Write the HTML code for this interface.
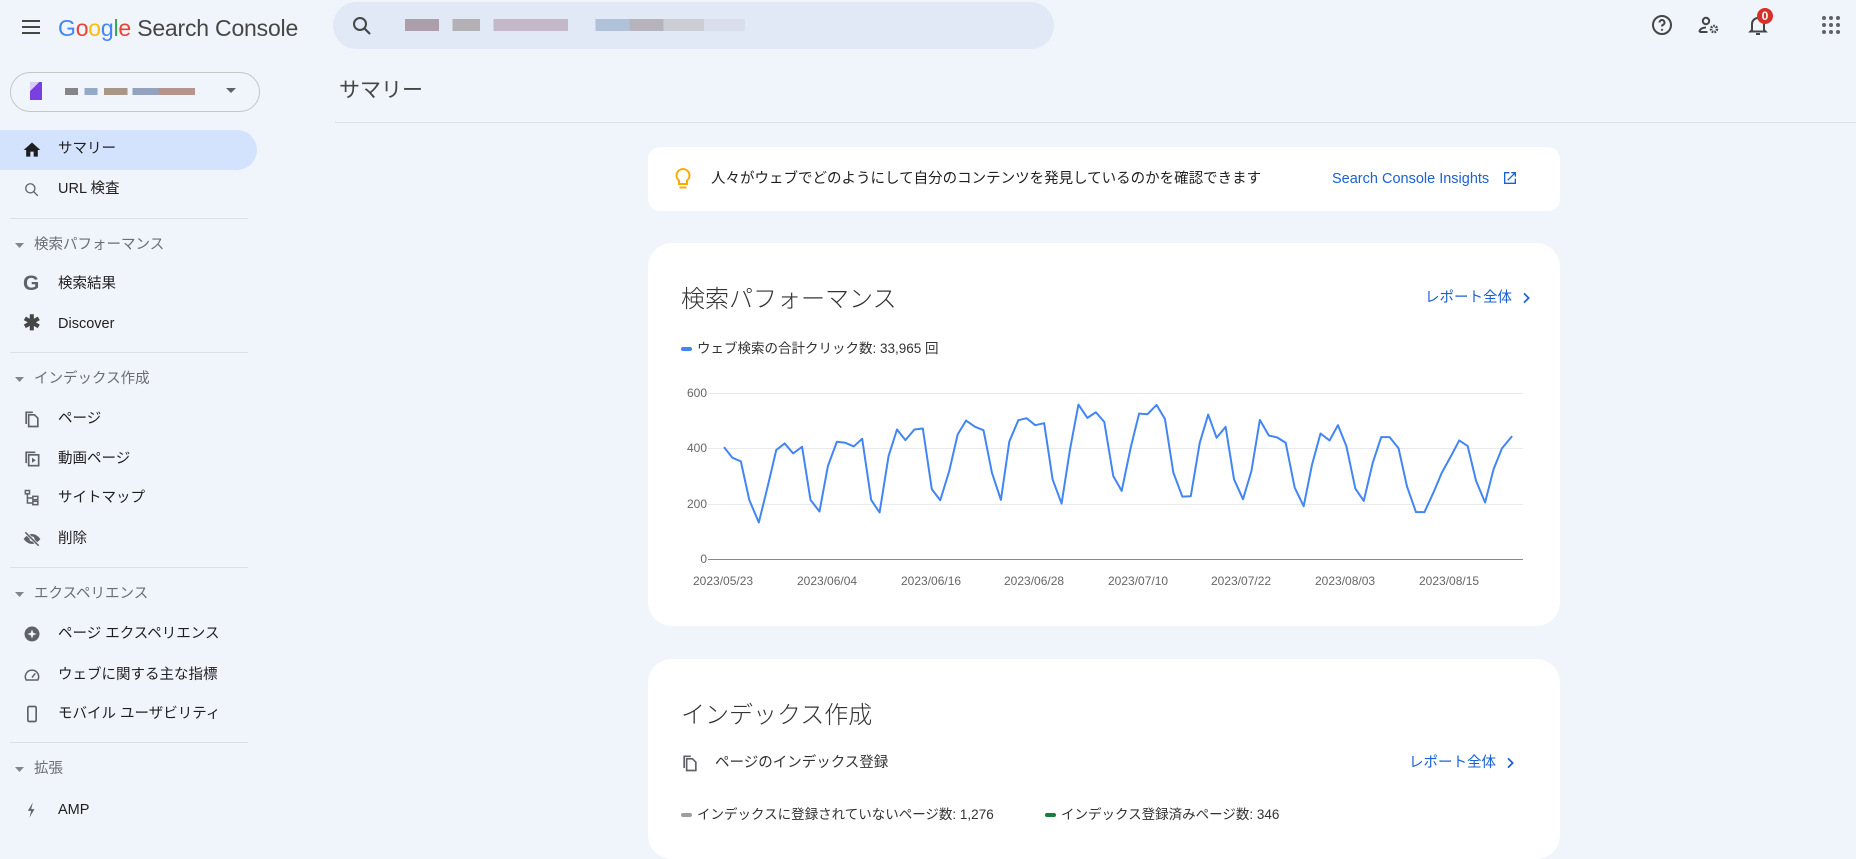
<!DOCTYPE html>
<html><head><meta charset="utf-8">
<style>
*{margin:0;padding:0;box-sizing:border-box}
body{width:1856px;height:829px;overflow:hidden;background:#f0f4fb;font-family:"Liberation Sans","Noto Sans CJK JP",sans-serif;color:#1f1f1f;position:relative}
.a{position:absolute}
.nav{position:absolute;left:58px;font-size:14.5px;color:#1f1f1f;line-height:20px}
.hd{position:absolute;left:34px;font-size:14.5px;color:#6b6f73;line-height:20px}
.ic{position:absolute;left:22px;width:20px;height:20px}
.div{position:absolute;left:10px;width:238px;height:1px;background:#dcdfe4}
.card{position:absolute;left:648px;width:912px;background:#fff}
.link{color:#1a61d6;font-size:14.5px}
</style></head><body>
<svg class="a" style="left:19px;top:15px" width="24" height="24" viewBox="0 0 24 24"><path d="M3 6h18M3 12h18M3 18h18" stroke="#444746" stroke-width="2"/></svg>
<div class="a" style="left:58px;top:12px;font-size:23px;line-height:32px;letter-spacing:-0.2px"><span style="color:#4285f4">G</span><span style="color:#ea4335">o</span><span style="color:#fbbc05">o</span><span style="color:#4285f4">g</span><span style="color:#34a853">l</span><span style="color:#ea4335">e</span><span style="color:#444746"> Search Console</span></div>
<div class="a" style="left:333px;top:2px;width:721px;height:47px;border-radius:24px;background:#e1e9f7"></div>
<svg class="a" style="left:350px;top:14px" width="24" height="24" viewBox="0 0 24 24"><circle cx="10" cy="10" r="6" fill="none" stroke="#444746" stroke-width="2"/><path d="M14.5 14.5L20 20" stroke="#444746" stroke-width="2.2"/></svg>
<div class="a" style="left:405px;top:19px;width:340px;height:12px;background:linear-gradient(90deg,#9a8590 0 10%,transparent 10% 14%,#a49e9e 14% 22%,transparent 22% 26%,#b7a7b7 26% 48%,transparent 48% 56%,#9fb4d0 56% 66%,#a9a1a8 66% 76%,#c4c6c9 76% 88%,#d8dbe5 88%);opacity:.75"></div>
<svg class="a" style="left:1650px;top:13px" width="24" height="24" viewBox="0 0 24 24"><circle cx="12" cy="12" r="9" fill="none" stroke="#444746" stroke-width="2"/><path d="M9.5 9.5a2.5 2.5 0 1 1 3.5 2.3c-.7.4-1 .9-1 1.7" fill="none" stroke="#444746" stroke-width="2"/><circle cx="12" cy="16.8" r="1.1" fill="#444746"/></svg>
<svg class="a" style="left:1697px;top:13px" width="24" height="24" viewBox="0 0 24 24"><circle cx="9" cy="8" r="3.2" fill="none" stroke="#444746" stroke-width="2"/><path d="M2.5 19c0-3 3-4.5 6.5-4.5" fill="none" stroke="#444746" stroke-width="2"/><path d="M2.5 19h8" stroke="#444746" stroke-width="2"/><circle cx="17" cy="16" r="3" fill="none" stroke="#444746" stroke-width="2.6" stroke-dasharray="1.6 1"/></svg>
<svg class="a" style="left:1746px;top:13px" width="24" height="24" viewBox="0 0 24 24"><path d="M6 17V11a6 6 0 0 1 12 0v6l1.5 1.5H4.5z" fill="none" stroke="#444746" stroke-width="2"/><path d="M10 21h4" stroke="#444746" stroke-width="2"/></svg>
<div class="a" style="left:1757px;top:8px;width:16px;height:16px;border-radius:8px;background:#d93025;color:#fff;font-size:12px;line-height:16px;text-align:center;font-weight:bold">0</div>
<svg class="a" style="left:1821px;top:15px" width="20" height="20" viewBox="0 0 20 20" fill="#5f6368"><circle cx="3" cy="3" r="2"/><circle cx="10" cy="3" r="2"/><circle cx="17" cy="3" r="2"/><circle cx="3" cy="10" r="2"/><circle cx="10" cy="10" r="2"/><circle cx="17" cy="10" r="2"/><circle cx="3" cy="17" r="2"/><circle cx="10" cy="17" r="2"/><circle cx="17" cy="17" r="2"/></svg>

<div class="a" style="left:10px;top:72px;width:250px;height:40px;border:1px solid #c4c7c5;border-radius:20px"></div>
<div class="a" style="left:30px;top:82px;width:12px;height:18px;background:linear-gradient(135deg,#d8ccf4 0 30%,#7a3fe0 30%)"></div>
<div class="a" style="left:65px;top:88px;width:130px;height:7px;background:linear-gradient(90deg,#555 0 10%,transparent 10% 15%,#6e8ab0 15% 25%,transparent 25% 30%,#8a6d55 30% 48%,transparent 48% 52%,#6b7fa5 52% 72%,#9a6b5e 72% 100%);opacity:.7"></div>
<svg class="a" style="left:226px;top:88px" width="10" height="6"><path d="M0 0h10L5 5z" fill="#5f6368"/></svg>

<div class="a" style="left:339px;top:77px;font-size:21px;line-height:28px;color:#444746">サマリー</div>
<div class="a" style="left:335px;top:122px;right:0;height:1px;background:#dcdfe4"></div>

<div class="a" style="left:0;top:130px;width:257px;height:40px;background:#d3e3fd;border-radius:0 20px 20px 0"></div>
<svg class="ic" style="top:140px" viewBox="0 0 24 24"><path d="M10 20v-6h4v6h5v-8h3L12 3 2 12h3v8z" fill="#1f1f1f"/></svg>
<div class="nav" style="top:139px">サマリー</div>
<svg class="ic" style="top:180px" viewBox="0 0 24 24"><circle cx="10" cy="10" r="5.5" fill="none" stroke="#5f6368" stroke-width="1.6"/><path d="M14 14l5 5" stroke="#5f6368" stroke-width="1.6"/></svg>
<div class="nav" style="top:179px">URL 検査</div>
<div class="div" style="top:218px"></div>
<svg class="a" style="left:15px;top:243px" width="9" height="5"><path d="M0 0h9L4.5 5z" fill="#80868b"/></svg>
<div class="hd" style="top:235px">検索パフォーマンス</div>
<div class="a" style="left:23px;top:272px;font-size:21px;font-weight:bold;color:#5f6368;line-height:24px">G</div>
<div class="nav" style="top:274px">検索結果</div>
<div class="a" style="left:23px;top:312px;font-size:21px;font-weight:bold;color:#444746;line-height:24px">✱</div>
<div class="nav" style="top:314px">Discover</div>
<div class="div" style="top:352px"></div>
<svg class="a" style="left:15px;top:377px" width="9" height="5"><path d="M0 0h9L4.5 5z" fill="#80868b"/></svg>
<div class="hd" style="top:369px">インデックス作成</div>
<svg class="ic" style="top:409px" viewBox="0 0 24 24"><path d="M4 3h9v2H6v13H4z" fill="#5f6368"/><path d="M8 7h7l4 4v10H8z" fill="none" stroke="#5f6368" stroke-width="2"/></svg>
<div class="nav" style="top:409px">ページ</div>
<svg class="ic" style="top:449px" viewBox="0 0 24 24"><path d="M4 3h12v2H6v12H4z" fill="#5f6368"/><rect x="8" y="7" width="12" height="13" fill="none" stroke="#5f6368" stroke-width="2"/><path d="M12 10.5v6l4.5-3z" fill="#5f6368"/></svg>
<div class="nav" style="top:449px">動画ページ</div>
<svg class="ic" style="top:488px" viewBox="0 0 24 24" fill="none" stroke="#5f6368" stroke-width="1.8"><rect x="4" y="3" width="5" height="4"/><rect x="13" y="10" width="6" height="4"/><rect x="13" y="16" width="6" height="4"/><path d="M6.5 7v11H13M6.5 12H13"/></svg>
<div class="nav" style="top:488px">サイトマップ</div>
<svg class="ic" style="top:529px" viewBox="0 0 24 24"><path d="M2 12s4-6 10-6 10 6 10 6-4 6-10 6S2 12 2 12z" fill="#5f6368"/><circle cx="12" cy="12" r="3" fill="#f0f4fb"/><path d="M4 4l16 16" stroke="#f0f4fb" stroke-width="3.5"/><path d="M4 4l16 16" stroke="#5f6368" stroke-width="1.8"/></svg>
<div class="nav" style="top:529px">削除</div>
<div class="div" style="top:567px"></div>
<svg class="a" style="left:15px;top:592px" width="9" height="5"><path d="M0 0h9L4.5 5z" fill="#80868b"/></svg>
<div class="hd" style="top:584px">エクスペリエンス</div>
<svg class="ic" style="top:624px" viewBox="0 0 24 24"><circle cx="12" cy="12" r="9" fill="#5f6368"/><path d="M12 6.5l1.5 4 4 1.5-4 1.5-1.5 4-1.5-4-4-1.5 4-1.5z" fill="#f0f4fb"/></svg>
<div class="nav" style="top:624px">ページ エクスペリエンス</div>
<svg class="ic" style="top:665px" viewBox="0 0 24 24" fill="none" stroke="#5f6368" stroke-width="1.8"><path d="M5 18a8 8 0 1 1 14 0z"/><path d="M12 15l4-5"/></svg>
<div class="nav" style="top:665px">ウェブに関する主な指標</div>
<svg class="ic" style="top:704px" viewBox="0 0 24 24"><rect x="7" y="3" width="10" height="18" rx="1.5" fill="none" stroke="#5f6368" stroke-width="2"/></svg>
<div class="nav" style="top:704px">モバイル ユーザビリティ</div>
<div class="div" style="top:742px"></div>
<svg class="a" style="left:15px;top:767px" width="9" height="5"><path d="M0 0h9L4.5 5z" fill="#80868b"/></svg>
<div class="hd" style="top:759px">拡張</div>
<svg class="ic" style="top:800px" viewBox="0 0 24 24"><path d="M13 3L7 13h4l-2 8 6-10h-4z" fill="#5f6368"/></svg>
<div class="nav" style="top:800px">AMP</div>

<div class="card" style="top:147px;height:64px;border-radius:12px"></div>
<svg class="a" style="left:673px;top:167px" width="20" height="24" viewBox="0 0 20 24"><path d="M10 2a6.5 6.5 0 0 0-4 11.6V17h8v-3.4A6.5 6.5 0 0 0 10 2z" fill="none" stroke="#f9ab00" stroke-width="2"/><path d="M6.5 20.5h7" stroke="#f9ab00" stroke-width="2"/></svg>
<div class="a" style="left:711px;top:169px;font-size:14.5px;line-height:20px;color:#1f1f1f">人々がウェブでどのようにして自分のコンテンツを発見しているのかを確認できます</div>
<div class="a link" style="left:1332px;top:169px;line-height:20px">Search Console Insights</div>
<svg class="a" style="left:1502px;top:170px" width="16" height="16" viewBox="0 0 24 24"><path d="M19 19H5V5h6V3H3v18h18v-8h-2zM14 3v2h3.6l-9.8 9.8 1.4 1.4L19 6.4V10h2V3z" fill="#1a61d6"/></svg>

<div class="card" style="top:243px;height:383px;border-radius:24px"></div>
<div class="a" style="left:681px;top:283px;font-size:24px;line-height:34px;color:#333;font-weight:300">検索パフォーマンス</div>
<div class="a link" style="left:1425px;top:288px;line-height:20px">レポート全体</div>
<svg class="a" style="left:1518px;top:290px" width="16" height="16" viewBox="0 0 24 24"><path d="M9 5l7 7-7 7" fill="none" stroke="#1a61d6" stroke-width="2.6"/></svg>
<div class="a" style="left:681px;top:347px;width:11px;height:4px;border-radius:2px;background:#4285f4"></div>
<div class="a" style="left:697px;top:339px;font-size:13.5px;line-height:20px;color:#333">ウェブ検索の合計クリック数: 33,965 回</div>
<div class="a" style="left:708px;top:393px;width:815px;height:1px;background:#e8eaed"></div>
<div class="a" style="left:708px;top:448px;width:815px;height:1px;background:#e8eaed"></div>
<div class="a" style="left:708px;top:504px;width:815px;height:1px;background:#e8eaed"></div>
<div class="a" style="left:708px;top:559px;width:815px;height:1px;background:#888"></div>
<div class="a" style="left:660px;top:386px;width:47px;text-align:right;font-size:12px;color:#666;line-height:14px">600</div>
<div class="a" style="left:660px;top:441px;width:47px;text-align:right;font-size:12px;color:#666;line-height:14px">400</div>
<div class="a" style="left:660px;top:497px;width:47px;text-align:right;font-size:12px;color:#666;line-height:14px">200</div>
<div class="a" style="left:660px;top:552px;width:47px;text-align:right;font-size:12px;color:#666;line-height:14px">0</div>
<div class="a" style="top:574px;left:0;width:1856px;font-size:12px;color:#666;line-height:14px">
<span class="a" style="left:693px">2023/05/23</span><span class="a" style="left:797px">2023/06/04</span><span class="a" style="left:901px">2023/06/16</span><span class="a" style="left:1004px">2023/06/28</span><span class="a" style="left:1108px">2023/07/10</span><span class="a" style="left:1211px">2023/07/22</span><span class="a" style="left:1315px">2023/08/03</span><span class="a" style="left:1419px">2023/08/15</span></div>
<svg class="a" style="left:0;top:0" width="1856" height="829"><g transform="translate(659.4 379.7) scale(0.5617 0.332)"><polyline vector-effect="non-scaling-stroke" fill="none" stroke="#4285f4" stroke-width="2" stroke-linejoin="round" points="115,203 130,235 145,246 160,362 177,430 193,320 208,212 223,192 238,222 254,202 269,362 285,397 300,260 316,187 331,190 346,201 361,178 377,362 392,400 408,230 423,150 438,182 454,150 469,147 485,330 500,363 516,275 531,165 546,123 562,142 577,152 592,280 608,362 623,186 639,122 654,116 669,137 685,131 700,300 716,373 731,210 746,75 762,115 777,98 792,127 808,290 823,335 839,205 854,102 869,104 885,76 900,118 915,280 931,352 946,351 962,190 977,105 992,175 1008,142 1023,300 1039,360 1054,275 1069,121 1085,168 1100,174 1115,190 1131,325 1147,381 1162,255 1177,162 1193,183 1208,137 1223,200 1239,328 1254,365 1270,250 1285,173 1300,173 1316,207 1331,322 1347,399 1362,399 1378,340 1393,280 1408,234 1424,183 1439,200 1454,305 1470,370 1485,270 1500,207 1518,170"/></g></svg>

<div class="card" style="top:659px;height:200px;border-radius:24px"></div>
<div class="a" style="left:681px;top:699px;font-size:24px;line-height:34px;color:#333;font-weight:300">インデックス作成</div>
<svg class="a" style="left:680px;top:752px" width="20" height="22" viewBox="0 0 24 24"><path d="M4 3h9v2H6v13H4z" fill="#5f6368"/><path d="M8 7h7l4 4v10H8z" fill="none" stroke="#5f6368" stroke-width="2"/></svg>
<div class="a" style="left:715px;top:753px;font-size:14.5px;line-height:20px;color:#333">ページのインデックス登録</div>
<div class="a link" style="left:1409px;top:753px;line-height:20px">レポート全体</div>
<svg class="a" style="left:1502px;top:755px" width="16" height="16" viewBox="0 0 24 24"><path d="M9 5l7 7-7 7" fill="none" stroke="#1a61d6" stroke-width="2.6"/></svg>
<div class="a" style="left:681px;top:813px;width:11px;height:4px;border-radius:2px;background:#9e9e9e"></div>
<div class="a" style="left:697px;top:805px;font-size:13.5px;line-height:20px;color:#333">インデックスに登録されていないページ数: 1,276</div>
<div class="a" style="left:1045px;top:813px;width:11px;height:4px;border-radius:2px;background:#188038"></div>
<div class="a" style="left:1061px;top:805px;font-size:13.5px;line-height:20px;color:#333">インデックス登録済みページ数: 346</div>
</body></html>
